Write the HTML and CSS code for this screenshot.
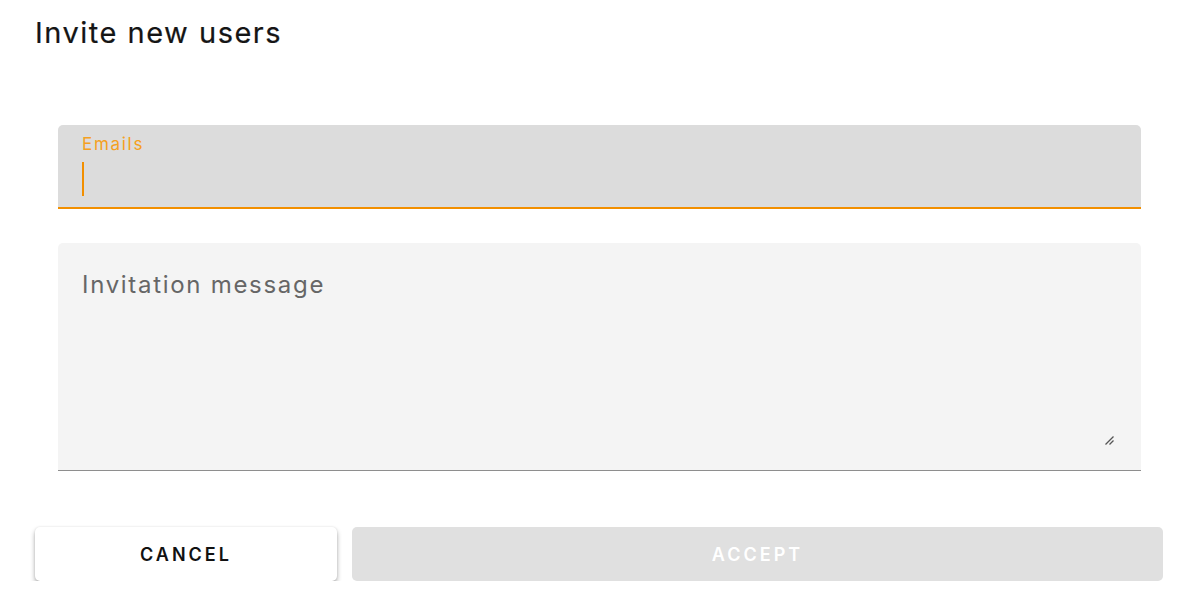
FILE: index.html
```html
<!DOCTYPE html>
<html>
<head>
<meta charset="utf-8">
<link rel="stylesheet" href="styles.css">
</head>
<body>
<div class="dialog">
  <h1 class="title">Invite new users</h1>
  <div class="fields">
    <div class="field field-emails">
      <span class="label">Emails</span>
      <span class="caret"></span>
    </div>
    <div class="field field-message">
      <span class="placeholder">Invitation message</span>
      <svg class="resize" width="12" height="12" viewBox="0 0 12 12">
        <path d="M1.5 10.5 L9.5 2.5 M5.5 10.5 L9.5 6.5" stroke="#555" stroke-width="1.3" fill="none"/>
      </svg>
    </div>
  </div>
  <div class="actions">
    <button class="btn btn-cancel">CANCEL</button>
    <button class="btn btn-accept">ACCEPT</button>
  </div>
</div>
</body>
</html>
```
FILE: styles.css
```css
html, body {
  margin: 0;
  padding: 0;
  background: #ffffff;
}
body {
  font-family: "Inter", "Open Sans", "Liberation Sans", sans-serif;
  color: #1a1a1a;
}
.dialog {
  width: 1189px;
  padding: 14px 26px 0 35px;
  box-sizing: border-box;
}
.title {
  margin: 0;
  font-size: 29px;
  font-weight: 400;
  line-height: 38px;
  color: #151515;
  letter-spacing: 1.5px;
  -webkit-text-stroke: 0.2px #151515;
}
.fields {
  padding: 73px 22px 0 23px;
  display: flex;
  flex-direction: column;
  gap: 34px;
}
.field {
  position: relative;
  border-radius: 5px 5px 0 0;
  box-sizing: border-box;
}
.field-emails {
  height: 84px;
  background: #dcdcdc;
  border-bottom: 2px solid #f28f00;
  padding: 9px 24px 0;
  display: flex;
  flex-direction: column;
}
.label {
  font-size: 17px;
  line-height: 20px;
  color: #f5a020;
  letter-spacing: 1.7px;
}
.caret {
  width: 2px;
  height: 34px;
  margin-top: 8px;
  background: #f28f00;
}
.field-message {
  height: 228px;
  background: #f4f4f4;
  border-bottom: 1px solid #8e8e8e;
  padding: 27px 24px 0;
}
.placeholder {
  font-size: 24px;
  line-height: 30px;
  color: #666666;
  letter-spacing: 1.7px;
}
.resize {
  position: absolute;
  right: 25px;
  bottom: 24px;
}
.actions {
  display: flex;
  gap: 15px;
  margin-top: 56px;
}
.btn {
  height: 54px;
  border: none;
  border-radius: 5px;
  font-family: inherit;
  font-size: 18px;
  font-weight: 600;
  letter-spacing: 3px;
}
.btn-cancel {
  width: 302px;
  background: #ffffff;
  color: #111111;
  box-shadow: 0 3px 5px rgba(0,0,0,0.32), 0 0 2px rgba(0,0,0,0.1);
}
.btn-accept {
  flex: 1;
  background: #e0e0e0;
  color: #ffffff;
}
```
